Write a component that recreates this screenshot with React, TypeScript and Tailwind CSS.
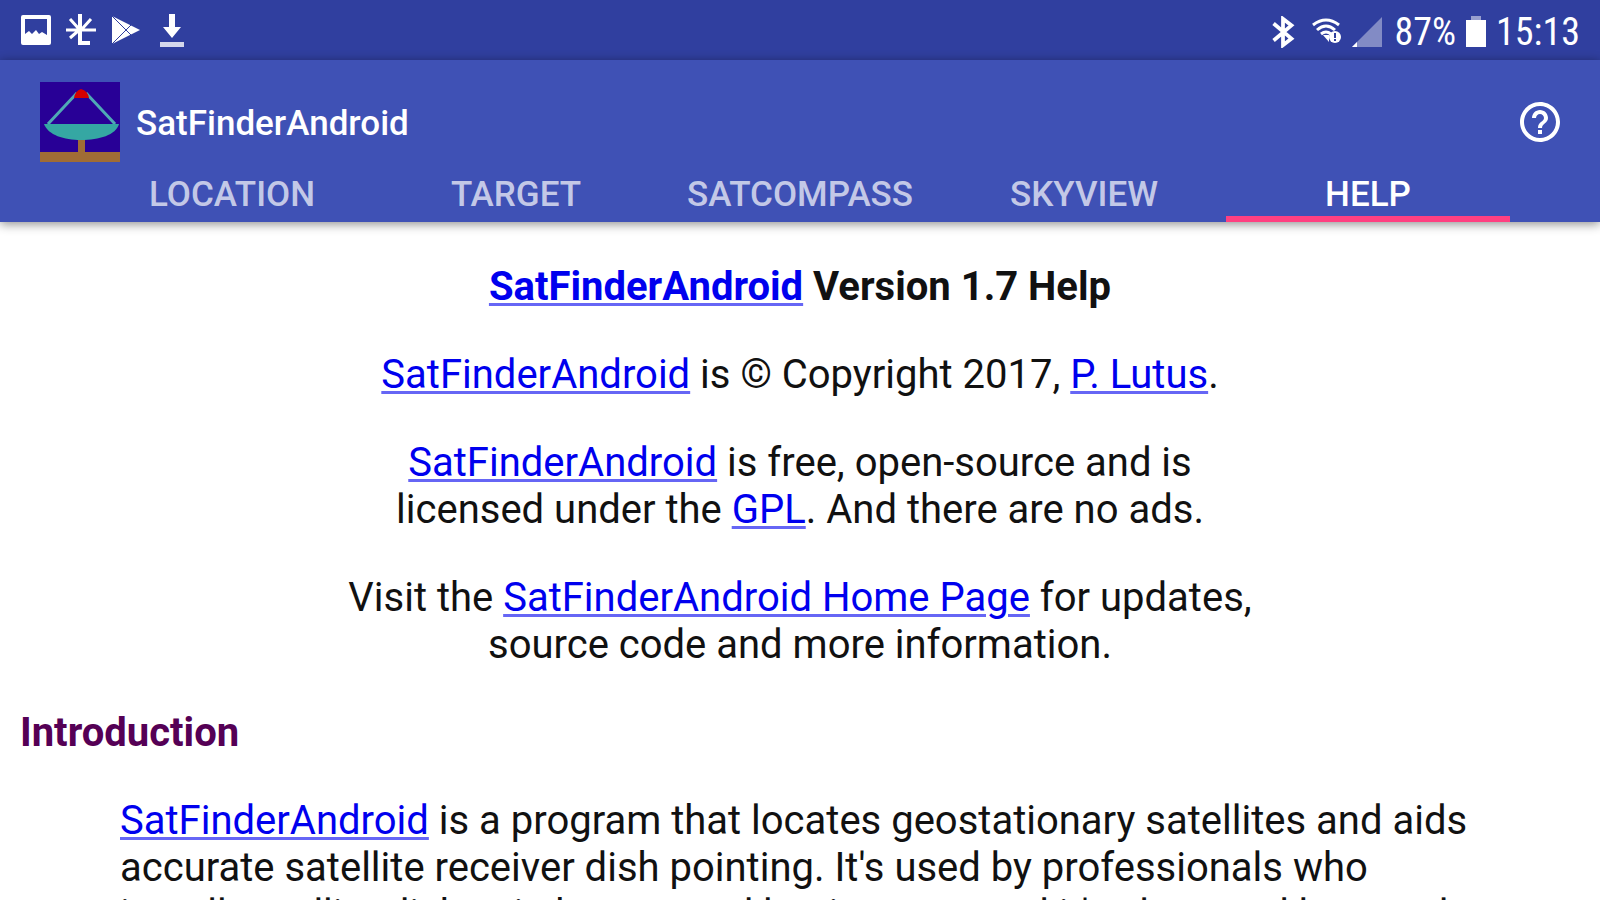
import React from 'react';
import { MdHelpOutline } from 'react-icons/md';

const tabs = ['LOCATION', 'TARGET', 'SATCOMPASS', 'SKYVIEW', 'HELP'];

const HelpLink: React.FC<{ children: React.ReactNode }> = ({ children }) => (
  <a href="#help" className="text-[#0000ee] underline decoration-[#0000ee]/60 decoration-3 underline-offset-3">{children}</a>
);

const AppLogo: React.FC = () => (
  <svg viewBox="0 0 80 80" className="w-20 h-20" aria-hidden="true">
    <rect width="80" height="80" fill="#280096" />
    <path d="M8 42 L37 11 M75 42 L46 11" stroke="#4fa9b5" strokeWidth="3" fill="none" />
    <path d="M34 16 Q35 9 41 7 Q48 9 49 16 Z" fill="#d40000" />
    <rect x="38" y="56" width="7" height="16" fill="#a06c35" />
    <path d="M4 42 H79 C76 53 59 58 41 58 C24 58 8 53 4 42 Z" fill="#35a7a3" />
    <rect y="70" width="80" height="10" fill="#a06c35" />
  </svg>
);

const StatusBar: React.FC = () => (
  <div className="flex shrink-0 items-center justify-between h-15 px-5 bg-[#303f9f] text-white">
    <div className="flex items-center gap-3">
      <svg viewBox="0 0 32 32" className="w-8 h-8" fill="currentColor" aria-hidden="true">
        <path fillRule="evenodd" d="M3 1 H29 Q31 1 31 3 V29 Q31 31 29 31 H3 Q1 31 1 29 V3 Q1 1 3 1 Z M5 5 V20 L9 17 L12 20 L16 16 L19 20 L22 18 L27 21 V5 Z" />
      </svg>
      <svg viewBox="0 0 32 32" className="w-8 h-8" fill="none" stroke="currentColor" strokeWidth="3" aria-hidden="true">
        <path d="M2 16 H32 M6 5 L15 15 M27 5 L18 15 M14 17 L6 24" />
        <path d="M16 0 V29 H26" strokeWidth="4" />
      </svg>
      <svg viewBox="0 0 32 32" className="w-8 h-8" aria-hidden="true">
        <path d="M4 2 L32 16 L4 30 Z" fill="currentColor" />
        <path d="M4 2 L23 21 M4 30 L23 11" stroke="#303f9f" strokeWidth="1" />
      </svg>
      <svg viewBox="0 0 32 36" className="w-8 h-9 ml-1" fill="currentColor" aria-hidden="true">
        <path d="M13 2 H19 V15 H25 L16 26 L7 15 H13 Z" />
        <rect x="4" y="30" width="24" height="5" opacity="0.8" />
      </svg>
    </div>
    <div className="flex items-center pt-1 text-[38px] leading-10 font-[Roboto_Condensed,Roboto,sans-serif]">
      <svg viewBox="0 0 24 34" className="w-6 h-8 mr-4" fill="none" stroke="currentColor" strokeWidth="4" aria-hidden="true">
        <path d="M2 8 L21 24 L12 31 V3 L21 10 L2 26" />
      </svg>
      <svg viewBox="0 0 32 28" className="w-8 h-7 mr-2" fill="none" stroke="currentColor" strokeWidth="3" aria-hidden="true">
        <path d="M2 7 Q15 -3 28 7 M6 12 Q15 4 24 12 M10 16 Q15 12 20 16" />
        <path d="M12 17 H18 V24 Z" fill="currentColor" stroke="none" />
        <circle cx="24" cy="19" r="6" fill="currentColor" stroke="none" />
        <path d="M24 15 V20 M24 21 V23" stroke="#303f9f" strokeWidth="2" />
      </svg>
      <svg viewBox="0 0 32 32" className="w-8 h-8 mr-3" fill="currentColor" aria-hidden="true">
        <path d="M31 1 V31 H1 Z" opacity="0.4" />
        <path d="M6 26 V31 H1 Z" />
      </svg>
      <span>87%</span>
      <svg viewBox="0 0 22 32" className="w-6 h-8 mx-2" fill="currentColor" aria-hidden="true">
        <rect x="6" y="0" width="10" height="5" opacity="0.5" />
        <rect x="1" y="4" width="20" height="27" />
      </svg>
      <span>15:13</span>
    </div>
  </div>
);

const App: React.FC = () => {
  return (
    <div className="h-screen overflow-hidden flex flex-col bg-white text-[#111] font-[Roboto,sans-serif]">
      <StatusBar />

      <header className="shrink-0 bg-[#3f51b5] text-white shadow-[0_2px_10px_rgba(0,0,0,0.45)]">
        <div className="flex items-center justify-between pt-[22px] pl-10 pr-9">
          <div className="flex items-center gap-4">
            <AppLogo />
            <h1 className="pt-1 text-[35px] leading-10 font-medium">SatFinderAndroid</h1>
          </div>
          <button type="button" aria-label="Help">
            <MdHelpOutline className="w-12 h-12" />
          </button>
        </div>
        <nav className="flex justify-center">
          {tabs.map((tab) => (
            <button
              key={tab}
              type="button"
              className={`w-71 h-15 pt-3 text-[35px] leading-10 font-medium border-b-6 ${
                tab === 'HELP' ? 'border-[#ff4081]' : 'border-transparent text-white/70'
              }`}
            >
              {tab}
            </button>
          ))}
        </nav>
      </header>

      <main className="px-5 pt-[41px] text-[40px] leading-[47px]">
        <div className="text-center">
          <h2 className="mb-[41px] font-bold">
            <HelpLink>SatFinderAndroid</HelpLink> Version 1.7 Help
          </h2>
          <p className="mb-[41px]">
            <HelpLink>SatFinderAndroid</HelpLink> is © Copyright 2017, <HelpLink>P. Lutus</HelpLink>.
          </p>
          <p className="mb-[41px]">
            <HelpLink>SatFinderAndroid</HelpLink> is free, open-source and is<br />
            licensed under the <HelpLink>GPL</HelpLink>. And there are no ads.
          </p>
          <p className="mb-[41px]">
            Visit the <HelpLink>SatFinderAndroid Home Page</HelpLink> for updates,<br />
            source code and more information.
          </p>
        </div>
        <h3 className="mb-[41px] font-bold text-[#550055]">Introduction</h3>
        <p className="mx-25">
          <HelpLink>SatFinderAndroid</HelpLink> is a program that locates geostationary satellites and aids
          accurate satellite receiver dish pointing. It's used by professionals who
          install satellite dishes in homes and businesses, and it's also used by people
        </p>
      </main>
    </div>
  );
};

export default App;
